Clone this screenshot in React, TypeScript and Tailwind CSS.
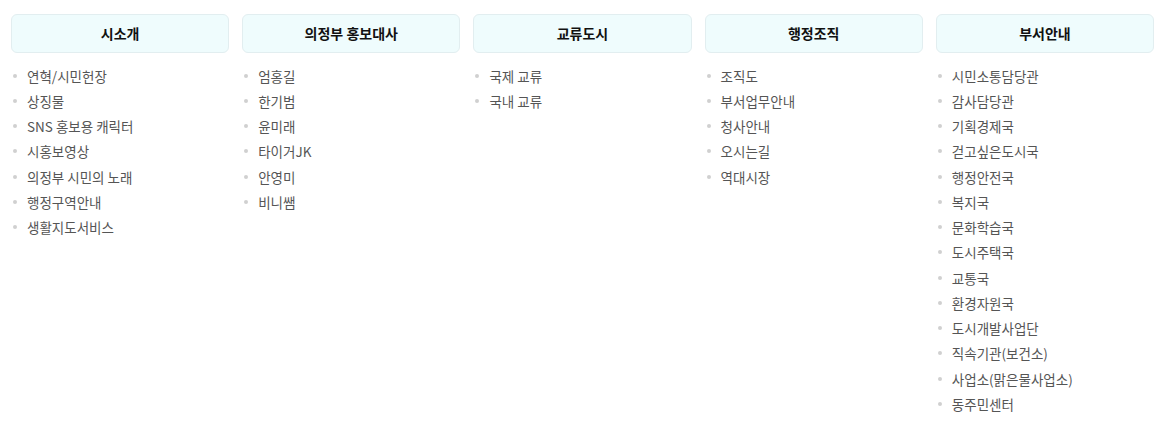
const menus = [
  {
    title: '시소개',
    items: ['연혁/시민헌장', '상징물', 'SNS 홍보용 캐릭터', '시홍보영상', '의정부 시민의 노래', '행정구역안내', '생활지도서비스'],
  },
  {
    title: '의정부 홍보대사',
    items: ['엄홍길', '한기범', '윤미래', '타이거JK', '안영미', '비니쌤'],
  },
  {
    title: '교류도시',
    items: ['국제 교류', '국내 교류'],
  },
  {
    title: '행정조직',
    items: ['조직도', '부서업무안내', '청사안내', '오시는길', '역대시장'],
  },
  {
    title: '부서안내',
    items: [
      '시민소통담당관',
      '감사담당관',
      '기획경제국',
      '걷고싶은도시국',
      '행정안전국',
      '복지국',
      '문화학습국',
      '도시주택국',
      '교통국',
      '환경자원국',
      '도시개발사업단',
      '직속기관(보건소)',
      '사업소(맑은물사업소)',
      '동주민센터',
    ],
  },
];

export default function App() {
  return (
    <div
      className="w-[1171px] h-[429px] bg-white pl-[11px] pr-[17px] pt-[14px]"
      style={{ fontFamily: '"Noto Sans CJK KR", "Noto Sans", sans-serif' }}
    >
      <div className="grid grid-cols-5 gap-x-[13px]">
        {menus.map((menu) => (
          <div key={menu.title}>
            <div className="h-[39px] flex items-center justify-center rounded-md border border-[#e2eef0] bg-[#effcfd] text-[14px] font-bold text-[#111]">
              {menu.title}
            </div>
            <ul className="mt-[10px]">
              {menu.items.map((item) => (
                <li key={item} className="flex items-center h-[25.25px] text-[13.5px] text-[#555]">
                  <span className="w-[4px] h-[4px] rounded-full bg-[#d0d0d0] ml-[2px] mr-[10px]" />
                  {item}
                </li>
              ))}
            </ul>
          </div>
        ))}
      </div>
    </div>
  );
}
